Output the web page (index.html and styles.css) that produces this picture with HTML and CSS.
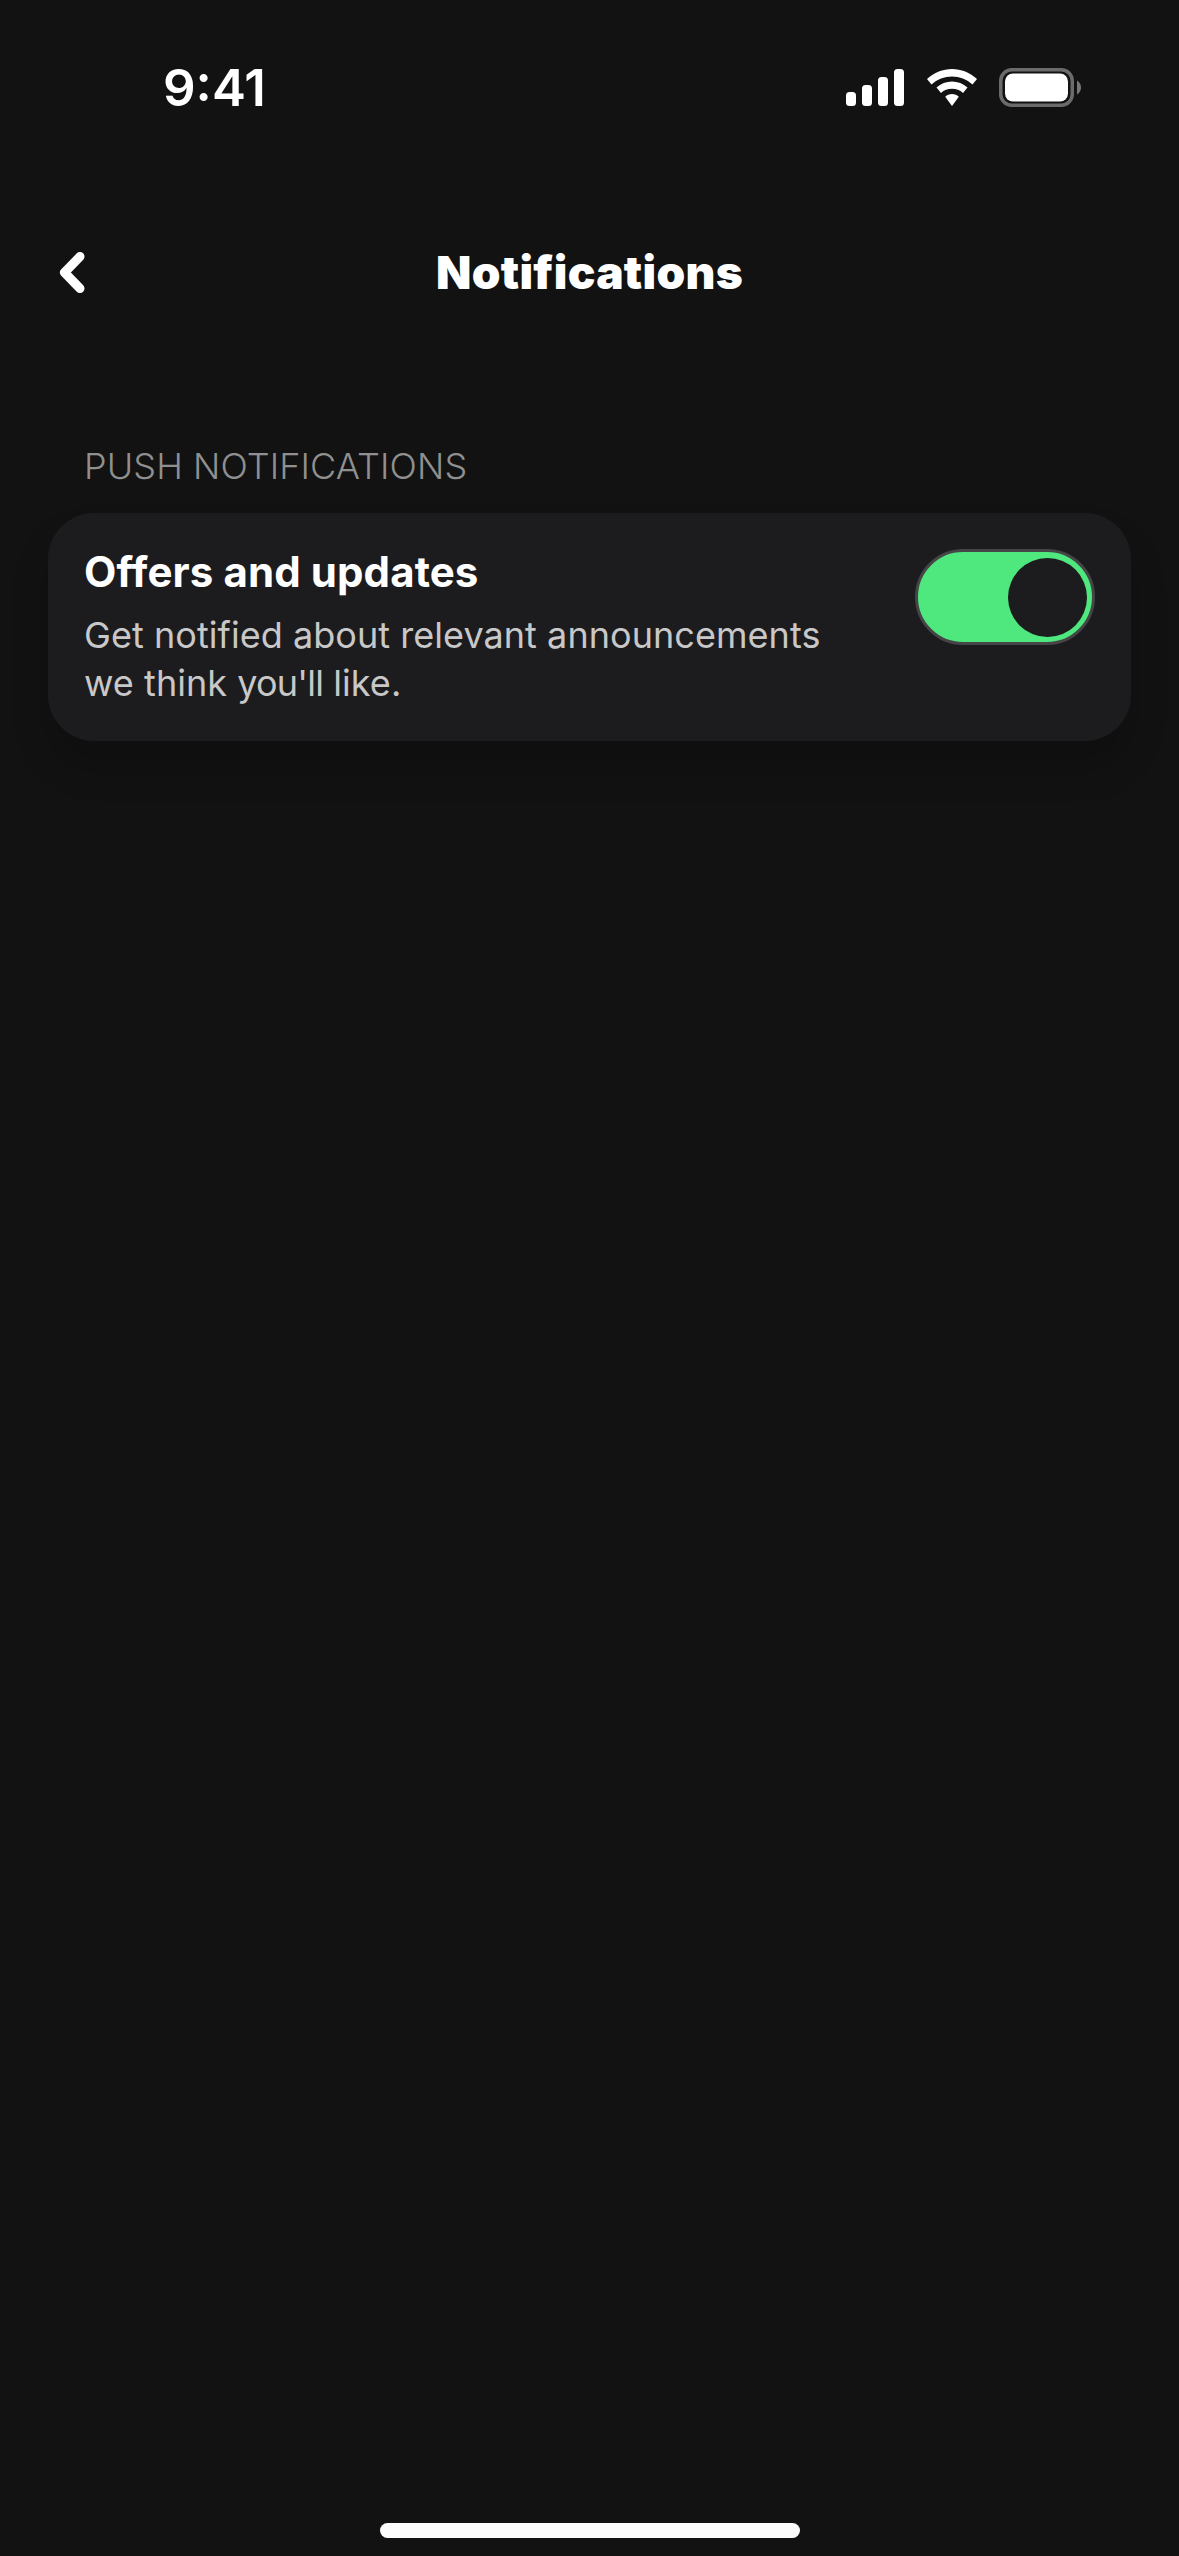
FILE: index.html
```html
<!DOCTYPE html>
<html lang="en">
<head>
<meta charset="utf-8">
<title>Notifications</title>
<link rel="stylesheet" href="styles.css">
</head>
<body>
<main class="screen">
  <header class="status-bar">
    <span class="time">9:41</span>
    <div class="status-icons">
      <svg class="signal" width="59" height="37" viewBox="0 0 59 37"><rect x="0" y="23" width="10" height="14" rx="3.5"/><rect x="16" y="16" width="10" height="21" rx="3.5"/><rect x="32" y="8" width="10" height="29" rx="3.5"/><rect x="48" y="0" width="10" height="37" rx="3.5"/></svg>
      <svg class="wifi" width="50" height="37" viewBox="0 0 50 37"><path d="M25 0C34 0 43 3.600 50 10L45.500 15.500C39.800 10.300 32.600 7.500 25 7.500S10.200 10.300 4.500 15.500L0 10C7 3.600 16 0 25 0Z"/><path d="M25 12.500C30.800 12.500 36.200 14.700 40.500 18.500L36 24C33 21.200 29.200 19.800 25 19.800S17 21.200 14 24L9.500 18.500C13.800 14.700 19.200 12.500 25 12.500Z"/><path d="M25 25C27.500 25 30 26 31.800 27.700L25 37L18.200 27.700C20 26 22.500 25 25 25Z"/></svg>
      <svg class="battery" width="82" height="39" viewBox="0 0 82 39"><rect class="battery-shell" x="1.750" y="1.750" width="71.500" height="35.500" rx="11"/><rect class="battery-fill" x="6" y="5.500" width="63" height="28" rx="8"/><path class="battery-cap" d="M78 12.500C80.500 14 82 16.500 82 19.500S80.500 25 78 26.500Z"/></svg>
    </div>
  </header>

  <nav class="nav-bar">
    <svg class="back" width="30" height="48" viewBox="0 0 30 48"><path d="M23 8.500L7.500 24.500L23 40.500"/></svg>
    <h1 class="nav-title">Notifications</h1>
  </nav>

  <section class="section">
    <h2 class="section-label">PUSH NOTIFICATIONS</h2>
    <div class="card">
      <div class="card-text">
        <h3 class="card-title">Offers and updates</h3>
        <p class="card-desc">Get notified about relevant announcements<br>we think <span class="tight">you'll</span> like.</p>
      </div>
      <div class="toggle"><span class="knob"></span></div>
    </div>
  </section>

  <div class="home-indicator"></div>
</main>
</body>
</html>
```
FILE: styles.css
```css
* { box-sizing: border-box; margin: 0; padding: 0; }
html, body { background: #121212; }
.screen {
  width: 1179px;
  height: 2556px;
  display: flex;
  flex-direction: column;
  background: #121212;
  color: #fff;
  font-family: Inter, "Noto Sans", sans-serif;
  overflow: hidden;
}
.status-bar {
  height: 126px;
  flex: none;
  display: flex;
  justify-content: space-between;
  align-items: flex-start;
  padding: 67px 98px 0 163px;
}
.time { font-size: 51px; line-height: 42px; font-weight: 600; }
.status-icons { display: flex; gap: 22px; align-items: center; margin-top: 1px; }
.signal, .wifi { fill: #fff; }
.battery-shell { fill: none; stroke: #6b6b6b; stroke-width: 3.5; }
.battery-fill { fill: #fff; }
.battery-cap { fill: #777; }
.nav-bar {
  height: 96px;
  margin-top: 98px;
  flex: none;
  position: relative;
  display: flex;
  align-items: center;
  justify-content: center;
}
.back {
  position: absolute;
  left: 57px;
  top: 24px;
  fill: none;
  stroke: #fff;
  stroke-width: 9;
  stroke-linecap: round;
  stroke-linejoin: round;
}
.nav-title {
  font-family: Inter, sans-serif;
  font-size: 46px;
  line-height: 60px;
  font-weight: 900;
  font-variant-ligatures: none;
  letter-spacing: 0.3px;
}
.section { margin-top: 124px; padding: 0 48px; flex: none; }
.section-label {
  margin-left: 36px;
  height: 44px;
  font-size: 36px;
  line-height: 44px;
  font-weight: 300;
  letter-spacing: 0.1px;
  color: #909090;
}
.card {
  margin-top: 25px;
  height: 228px;
  display: flex;
  justify-content: space-between;
  padding: 34px 36px 0;
  background: #1c1c1e;
  border-radius: 46px;
  box-shadow: 0 26px 37px rgba(0, 0, 0, 0.18);
}
.card-title { font-size: 42px; line-height: 50px; font-weight: 700; letter-spacing: 0.1px; }
.card-desc { margin-top: 14px; font-size: 36px; line-height: 48px; font-weight: 400; color: #c8c8c8; letter-spacing: 0.05px; }
.tight { letter-spacing: -0.8px; }
.toggle {
  width: 180px;
  height: 96px;
  flex: none;
  display: flex;
  align-items: center;
  justify-content: flex-end;
  padding-right: 5px;
  margin-top: 2px;
  background: #4fe87f;
  border: 3px solid #454547;
  border-radius: 48px;
}
.knob { width: 79px; height: 79px; border-radius: 50%; background: #1c1c1e; }
.home-indicator {
  margin: auto auto 18px;
  width: 420px;
  height: 15px;
  background: #fcfcfc;
  border-radius: 8px;
}
```
